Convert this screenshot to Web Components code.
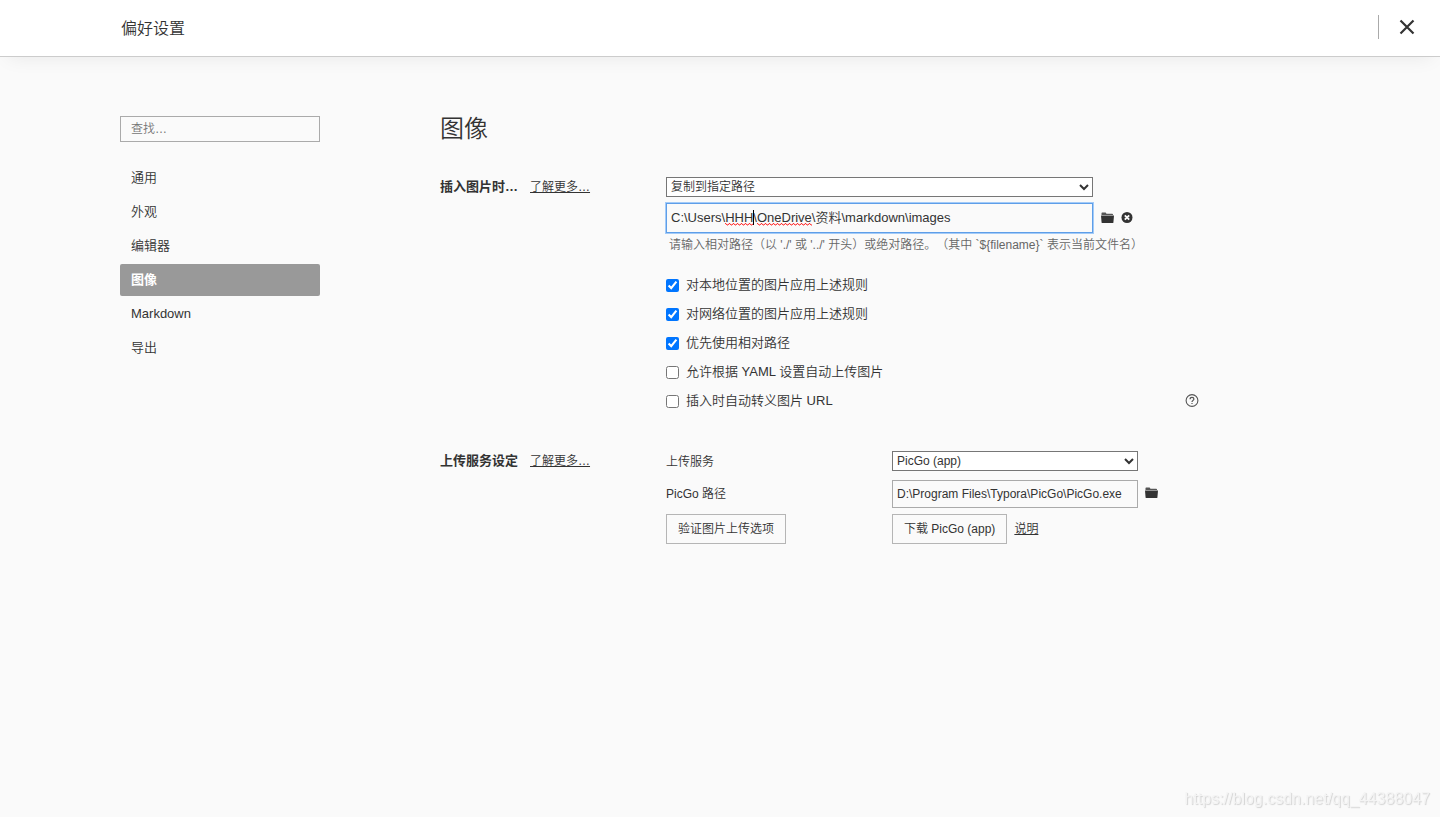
<!DOCTYPE html>
<html lang="zh-CN">
<head>
<meta charset="utf-8">
<meta name="viewport" content="width=device-width, initial-scale=1">
<title>偏好设置</title>
<style>
  html, body { margin: 0; min-height: 100%; background: #fafafa; }
  body {
    color: #333;
    font: 350 13px/20px "Liberation Sans", "Noto Sans CJK SC", sans-serif;
  }
</style>
</head>
<body>
<pref-page>
  <pref-header slot="header">偏好设置</pref-header>
  <pref-nav slot="nav"></pref-nav>
  <pref-section>
    <span slot="label">插入图片时…</span>
    <pref-insert></pref-insert>
  </pref-section>
  <pref-section>
    <span slot="label">上传服务设定</span>
    <pref-upload></pref-upload>
  </pref-section>
</pref-page>
<page-credit>https://blog.csdn.net/qq_44388047</page-credit>

<script>
const BASE = `
  *, *::before, *::after { box-sizing: border-box; }
  a { color: inherit; }
  input, select, button { font: inherit; color: inherit; margin: 0; }
  select {
    display: block; width: 100%; height: 20px; padding: 0;
    background: #fff; border: 1px solid #767676; border-radius: 0;
    font-size: 12px; line-height: 18px;
  }
  input[type=text] {
    display: block; width: 100%; padding: 0 4px;
    background: #fafafa; border: 1px solid #aaa; border-radius: 0; outline: none;
  }
`;

function define(name, css, html, setup) {
  const template = document.createElement('template');
  template.innerHTML = `<style>${BASE}${css}</style>${html}`;
  customElements.define(name, class extends HTMLElement {
    constructor() {
      super();
      this.attachShadow({ mode: 'open' }).append(template.content.cloneNode(true));
    }
    connectedCallback() { if (setup) setup(this, this.shadowRoot); }
  });
}

const ICONS = {
  folder: '<path fill="#555" d="M.5 3V1.2Q.5 .5 1.2 .5H4.4Q5 .5 5.2 1.2L5.4 1.8H11.2Q12 1.8 12 2.5V3Z"/><path fill="#333" d="M0 3.5H13L12.4 10.4Q12.3 11 11.7 11H1.3Q.7 11 .6 10.4Z"/>',
  clear: '<circle cx="6" cy="5.5" r="5.5" fill="#333"/><path d="M3.8 3.3L8.2 7.7M8.2 3.3L3.8 7.7" stroke="#fafafa" stroke-width="1.8"/>',
  help: '<circle cx="7" cy="5.5" r="5.9" fill="none" stroke="#555" stroke-width="1.1"/><path d="M5.1 4.2Q5.1 2.3 7 2.3T8.9 4Q8.9 4.8 7.9 5.5Q7 6.1 7 7" fill="none" stroke="#555" stroke-width="1.2"/><path d="M6.4 7.9H7.6V9.1H6.4Z" fill="#555"/>'
};

define('pref-icon', `
  :host { display: block; width: 13px; height: 13px; }
  button { display: block; width: 13px; height: 13px; padding: 0; border: 0; background: none; cursor: pointer; }
  svg { display: block; overflow: visible; }
`, `<button type="button"><svg width="13" height="13" viewBox="0 0 13 13" aria-hidden="true"></svg></button>`,
(host, root) => {
  root.querySelector('svg').innerHTML = ICONS[host.getAttribute('name')];
  root.querySelector('button').setAttribute('aria-label', host.getAttribute('label'));
});

define('pref-header', `
  :host {
    display: block; background: #fff; border-bottom: 1px solid #ccc;
    box-shadow: 0 8px 20px -8px rgba(0, 0, 0, .08);
  }
  header { display: flex; align-items: center; padding: 13px 24px 15px 121px; }
  h1 { flex: 1; margin: 0; padding-top: 4px; font-size: 16px; line-height: 24px; font-weight: inherit; }
  button {
    display: flex; align-items: center; justify-content: flex-end;
    width: 38px; height: 24px; padding: 0;
    background: none; border: 0; border-left: 1px solid #aaa; cursor: pointer;
  }
  svg { display: block; }
`, `<header>
  <h1><slot></slot></h1>
  <button type="button" aria-label="关闭"><svg width="18" height="18" viewBox="0 0 18 18"><path d="M2.5 2.5L15.5 15.5M15.5 2.5L2.5 15.5" stroke="#333" stroke-width="2.2"/></svg></button>
</header>`);

define('pref-nav', `
  :host { display: block; }
  input[type=text] { height: 26px; padding: 0 10px; font-size: 12px; }
  input::placeholder { color: #757575; opacity: 1; }
  ul { display: grid; gap: 2px; list-style: none; margin: 20px 0 0; padding: 0; }
  a { display: block; height: 32px; padding: 0 11px; line-height: 32px; border-radius: 2px; text-decoration: none; }
  a[aria-current] { background: #999; color: #fff; font-weight: bold; }
`, `<input type="text" placeholder="查找…" aria-label="查找">
<nav><ul>
  <li><a href="#general">通用</a></li>
  <li><a href="#appearance">外观</a></li>
  <li><a href="#editor">编辑器</a></li>
  <li><a href="#image" aria-current="page">图像</a></li>
  <li><a href="#markdown">Markdown</a></li>
  <li><a href="#export">导出</a></li>
</ul></nav>`);

define('pref-page', `
  :host { display: block; }
  .body {
    display: grid; grid-template-columns: 200px minmax(0, 1fr); column-gap: 120px;
    max-width: 1200px; margin: 0 auto; padding: 59px 0 40px;
  }
  h2 { margin: 0; padding-bottom: 34px; font-size: 24px; line-height: 26px; font-weight: inherit; }
  main { display: grid; gap: 39px; align-content: start; }
`, `<slot name="header"></slot>
<div class="body">
  <slot name="nav"></slot>
  <div><h2>图像</h2><main><slot></slot></main></div>
</div>`);

define('pref-section', `
  :host { display: grid; grid-template-columns: 226px minmax(0, 532px); }
  .label { display: flex; gap: 12px; align-items: baseline; align-self: start; padding-top: 1px; }
  .label ::slotted(span) { font-weight: bold; }
  a { font-size: 12px; }
`, `<div class="label"><slot name="label"></slot><a href="#more">了解更多…</a></div><div><slot></slot></div>`);

define('pref-check', `
  :host { display: block; }
  div { display: flex; align-items: center; }
  label { display: flex; align-items: center; gap: 7px; flex: 1; }
  input { width: 13px; height: 13px; }
`, `<div><label><input type="checkbox"><span><slot></slot></span></label><slot name="extra"></slot></div>`,
(host, root) => { root.querySelector('input').checked = host.hasAttribute('checked'); });

define('pref-insert', `
  :host { display: block; }
  .mode { max-width: 427px; padding-top: 1px; }
  .row { display: flex; align-items: center; gap: 7px; margin-top: 6px; }
  .path { position: relative; flex: 0 1 427px; margin-right: 1px; }
  .path input { height: 30px; padding-bottom: 4px; border-color: #5e9ee8; box-shadow: 0 0 0 1px #a3cbf8; }
  .marks { position: absolute; left: 5px; top: 4px; pointer-events: none; }
  p { margin: 2px 0 20px; padding-left: 3px; color: #666; font-size: 12px; white-space: nowrap; text-spacing-trim: space-all; }
  .checks { display: grid; gap: 9px; }
`, `<div class="mode"><select aria-label="插入图片时"><option>复制到指定路径</option></select></div>
<div class="row">
  <div class="path">
    <input type="text" aria-label="图片路径" spellcheck="false" value="C:\\Users\\HHH\\OneDrive\\资料\\markdown\\images">
    <svg class="marks" width="150" height="20" aria-hidden="true">
      <defs><pattern id="wave" width="4" height="3" patternUnits="userSpaceOnUse" y="16"><path d="M0 2L1 2L2 .6L3 .6L4 2" fill="none" stroke="#f22" stroke-width="1"/></pattern></defs>
      <rect x="54" y="16" width="28" height="3" fill="url(#wave)"/>
      <rect x="86" y="16" width="55" height="3" fill="url(#wave)"/>
      <rect x="82" y="3" width="1" height="15" fill="#000"/>
    </svg>
  </div>
  <pref-icon name="folder" label="选择文件夹"></pref-icon>
  <pref-icon name="clear" label="清除"></pref-icon>
</div>
<p>请输入相对路径（以 './' 或 '../' 开头）或绝对路径。（其中 \`\${filename}\` 表示当前文件名）</p>
<div class="checks">
  <pref-check checked>对本地位置的图片应用上述规则</pref-check>
  <pref-check checked>对网络位置的图片应用上述规则</pref-check>
  <pref-check checked>优先使用相对路径</pref-check>
  <pref-check>允许根据 YAML 设置自动上传图片</pref-check>
  <pref-check>插入时自动转义图片 URL<pref-icon slot="extra" name="help" label="帮助"></pref-icon></pref-check>
</div>`);

define('pref-upload', `
  :host {
    display: grid; grid-template: 22px auto auto / 226px 246px auto;
    justify-content: start; align-items: center; font-size: 12px;
  }
  label { padding-top: 2px; }
  pref-icon { margin-left: 7px; }
  input[type=text] { height: 28px; margin: 8px 0 6px; padding-bottom: 1px; font-size: 12px; }
  button {
    height: 30px; padding: 0 11px; white-space: nowrap;
    background: #fafafa; border: 1px solid #b5b5b5; border-radius: 0; cursor: pointer;
  }
  .service { grid-column: 2; }
  .service + label { grid-column: 1; }
  .actions { display: flex; align-items: center; gap: 7px; }
`, `<label for="service">上传服务</label>
<div class="service"><select id="service"><option>PicGo (app)</option></select></div>
<label for="exe">PicGo 路径</label>
<input id="exe" type="text" spellcheck="false" value="D:\\Program Files\\Typora\\PicGo\\PicGo.exe">
<pref-icon name="folder" label="选择文件"></pref-icon>
<div><button type="button">验证图片上传选项</button></div>
<div class="actions"><button type="button">下载 PicGo (app)</button><a href="#help">说明</a></div>`);

define('page-credit', `
  :host {
    position: fixed; right: 10px; bottom: 8px; color: #f4f4f4;
    font-size: 16px; line-height: 20px; text-shadow: 1px 1px 1px #d2d2d2; pointer-events: none;
  }
`, `<slot></slot>`);
</script>
</body>
</html>
